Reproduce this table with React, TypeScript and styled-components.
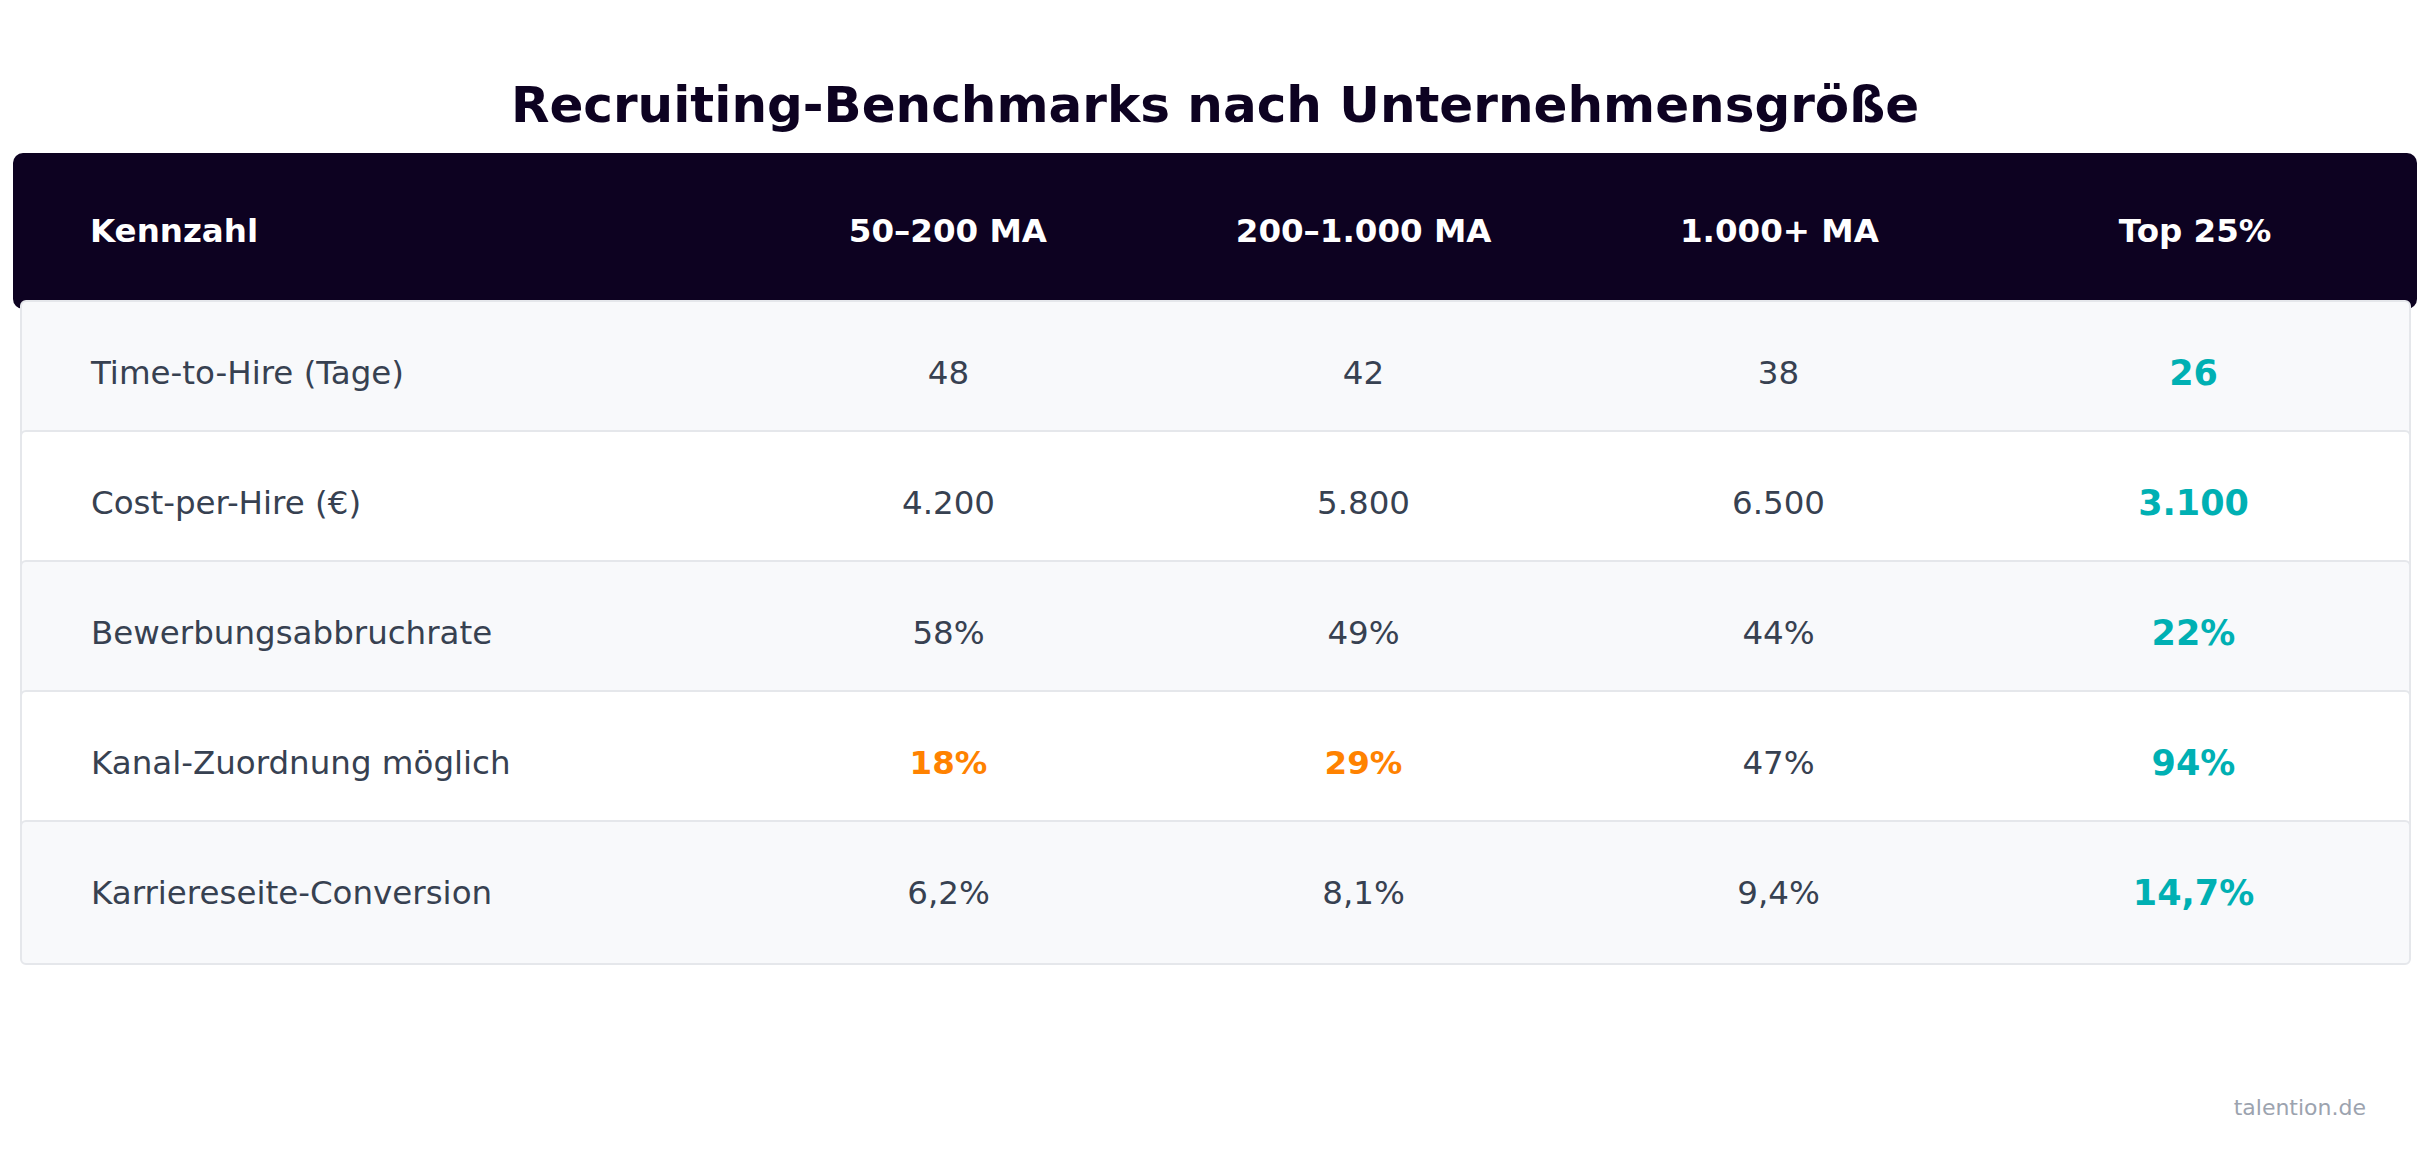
import styled, { createGlobalStyle } from "styled-components";

const GlobalStyle = createGlobalStyle`
  html, body {
    margin: 0;
    padding: 0;
    background: #ffffff;
  }
  body {
    font-family: "DejaVu Sans", "Liberation Sans", sans-serif;
  }
`;

const COLUMNS = "650px repeat(4, 1fr)";

const Page = styled.div`
  width: 2432px;
  height: 1152px;
  box-sizing: border-box;
  padding: 0 15px 0 13px;
  display: flex;
  flex-direction: column;
`;

const Title = styled.h1`
  margin: 76px 0 19px;
  font-size: 50px;
  line-height: 58px;
  font-weight: 700;
  color: #0d0221;
  text-align: center;
`;

const HeaderRow = styled.div`
  display: grid;
  grid-template-columns: ${COLUMNS};
  align-items: center;
  height: 156px;
  padding: 0 14px 0 77px;
  background: #0d0221;
  border-radius: 10px;
`;

const HeaderCell = styled.div<{ $first?: boolean }>`
  font-size: 32.5px;
  font-weight: 700;
  color: #ffffff;
  text-align: ${(p) => (p.$first ? "left" : "center")};
`;

const Body = styled.div`
  display: flex;
  flex-direction: column;
  margin: -9px 6px 0 7px;
`;

const Row = styled.div<{ $alt: boolean }>`
  display: grid;
  grid-template-columns: ${COLUMNS};
  align-items: center;
  height: 145px;
  box-sizing: border-box;
  padding: 0 8px 0 69px;
  background: ${(p) => (p.$alt ? "#f8f9fb" : "#ffffff")};
  border: 2px solid #e5e7eb;
  border-radius: 6px;

  & + & {
    margin-top: -15px;
  }
`;

const Label = styled.div`
  font-size: 32.5px;
  color: #374151;
`;

const Value = styled.div<{ $tone?: "good" | "warn" }>`
  text-align: center;
  font-size: ${(p) => (p.$tone === "good" ? "35px" : "32.5px")};
  font-weight: ${(p) => (p.$tone ? 700 : 400)};
  color: ${(p) =>
    p.$tone === "good" ? "#00b0b3" : p.$tone === "warn" ? "#ff8200" : "#374151"};
`;

const Footer = styled.div`
  margin-top: auto;
  padding: 0 51px 32px 0;
  text-align: right;
  font-size: 22px;
  color: #9ca3af;
`;

type Tone = "good" | "warn" | undefined;

const headers = ["50–200 MA", "200–1.000 MA", "1.000+ MA", "Top 25%"];

const rows: { label: string; values: [string, Tone][] }[] = [
  {
    label: "Time-to-Hire (Tage)",
    values: [["48", undefined], ["42", undefined], ["38", undefined], ["26", "good"]],
  },
  {
    label: "Cost-per-Hire (€)",
    values: [["4.200", undefined], ["5.800", undefined], ["6.500", undefined], ["3.100", "good"]],
  },
  {
    label: "Bewerbungsabbruchrate",
    values: [["58%", undefined], ["49%", undefined], ["44%", undefined], ["22%", "good"]],
  },
  {
    label: "Kanal-Zuordnung möglich",
    values: [["18%", "warn"], ["29%", "warn"], ["47%", undefined], ["94%", "good"]],
  },
  {
    label: "Karriereseite-Conversion",
    values: [["6,2%", undefined], ["8,1%", undefined], ["9,4%", undefined], ["14,7%", "good"]],
  },
];

const App = () => {
  return (
    <>
      <GlobalStyle />
      <Page>
        <Title>Recruiting-Benchmarks nach Unternehmensgröße</Title>
        <HeaderRow>
          <HeaderCell $first>Kennzahl</HeaderCell>
          {headers.map((h) => (
            <HeaderCell key={h}>{h}</HeaderCell>
          ))}
        </HeaderRow>
        <Body>
          {rows.map((row, i) => (
            <Row key={row.label} $alt={i % 2 === 0}>
              <Label>{row.label}</Label>
              {row.values.map(([v, tone], j) => (
                <Value key={j} $tone={tone}>
                  {v}
                </Value>
              ))}
            </Row>
          ))}
        </Body>
        <Footer>talention.de</Footer>
      </Page>
    </>
  );
};

export default App;
